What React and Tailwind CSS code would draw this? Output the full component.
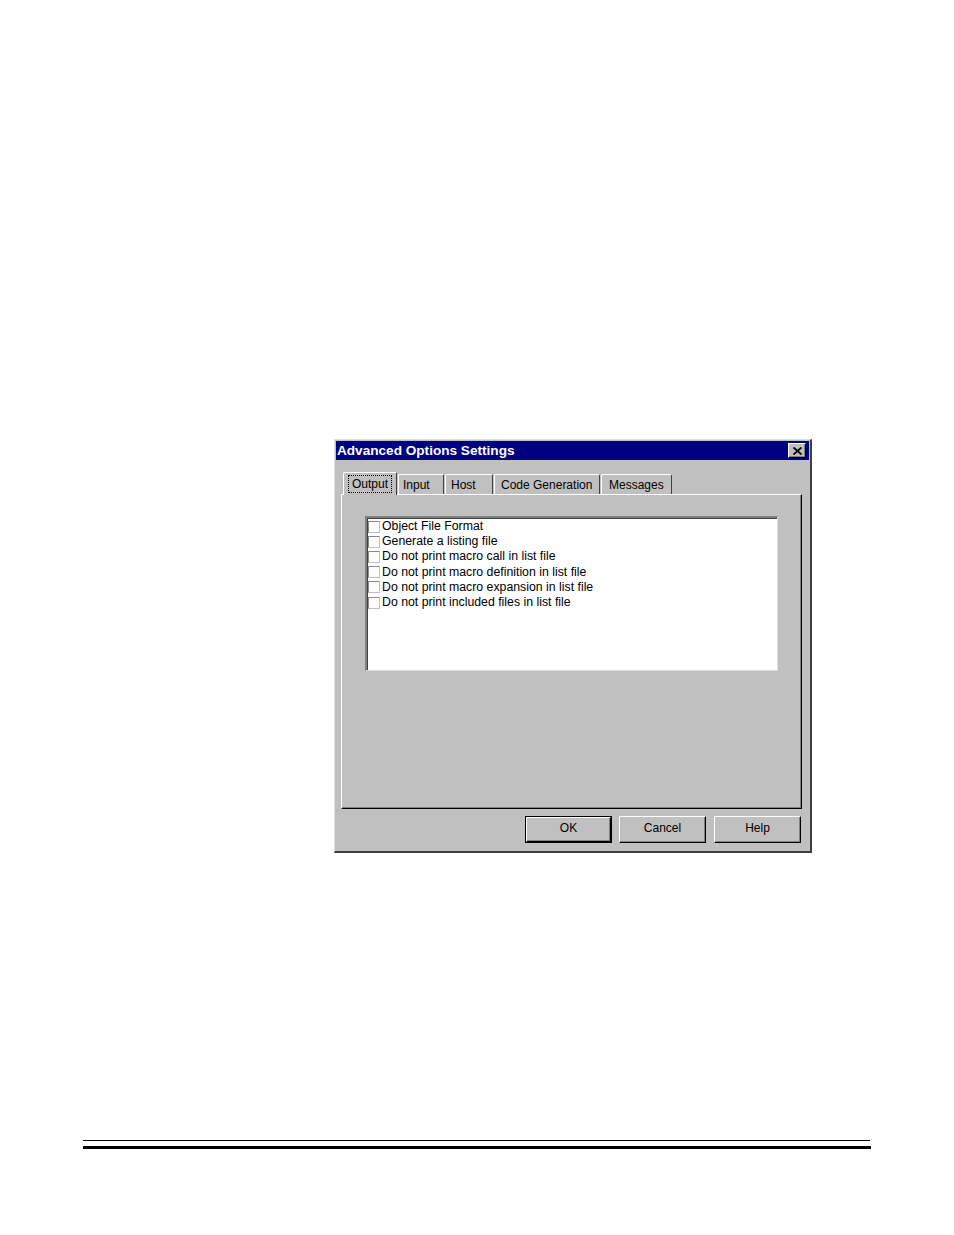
import React from "react";

const items = [
  "Object File Format",
  "Generate a listing file",
  "Do not print macro call in list file",
  "Do not print macro definition in list file",
  "Do not print macro expansion in list file",
  "Do not print included files in list file",
];

function Tab({ label, w, selected }) {
  if (selected) {
    return (
      <div
        className={`h-[23px] ${w} -mb-px relative z-10 bg-[#c0c0c0] border-t border-l border-white border-r border-r-[#404040] rounded-t-[2px] flex items-center justify-center`}
      >
        <span className="border border-dotted border-black px-[3px] leading-[15px] h-[18px] flex items-center">
          {label}
        </span>
      </div>
    );
  }
  return (
    <div
      className={`h-[20px] ${w} bg-[#c0c0c0] border-t border-l border-white border-r border-r-[#404040] rounded-t-[2px] flex items-center justify-start pt-[1px] whitespace-nowrap`}
    >
      {label}
    </div>
  );
}

function Button({ label, def, extra }) {
  return (
    <div
      className={`w-[87px] h-[27px] ${extra || ""} ${
        def ? "border border-black" : ""
      }`}
    >
      <div className="w-full h-full border-t border-l border-white border-r border-b border-r-[#000] border-b-[#000] shadow-[inset_-1px_-1px_#808080] flex items-center justify-center pb-[3px]">
        {label}
      </div>
    </div>
  );
}

export default function App() {
  return (
    <div
      className="min-h-[1235px] bg-white text-black text-[12px] overflow-hidden"
      style={{ fontFamily: '"Liberation Sans", Arial, sans-serif' }}
    >
      <div className="pt-[439px] pl-[334px]">
        <div className="w-[478px] h-[414px] bg-[#c0c0c0] border-t border-l border-[#dfdfdf] border-r-2 border-b-2 border-r-[#404040] border-b-[#404040] p-[1px] flex flex-col">
          {/* title bar */}
          <div className="h-[19px] bg-[#000080] flex items-center justify-between pl-[1px] pr-[3px]">
            <span className="text-white font-bold text-[13.6px] leading-none">
              Advanced Options Settings
            </span>
            <div className="w-[18px] h-[15px] bg-[#c0c0c0] border-t border-l border-white border-r border-b border-r-black border-b-black shadow-[inset_-1px_-1px_#808080] flex items-center justify-center">
              <svg width="9" height="8" viewBox="0 0 9 8">
                <path
                  d="M0.5 0.5 L8.5 7.5 M8.5 0.5 L0.5 7.5"
                  stroke="black"
                  strokeWidth="1.8"
                />
              </svg>
            </div>
          </div>

          {/* tabs */}
          <div className="mt-[11px] ml-[7px] flex items-end h-[23px]">
            <Tab label="Output" w="w-[54px]" selected />
            <Tab label="Input" w="w-[46px] ml-[1px] pl-[4px]" />
            <Tab label="Host" w="w-[48px] ml-[1px] pl-[5px]" />
            <Tab label="Code Generation" w="w-[106px] ml-[1px] pl-[6px]" />
            <Tab label="Messages" w="w-[71px] ml-[1px] pl-[7px]" />
          </div>

          {/* panel */}
          <div className="ml-[5px] w-[461px] h-[315px] border-t border-l border-white border-r border-b border-r-black border-b-black shadow-[inset_-1px_-1px_#808080] pt-[21px] pl-[23px]">
            <div className="w-[413px] h-[155px] bg-white border-t-2 border-l-2 border-t-[#808080] border-l-[#808080] border-r border-b border-r-[#dfdfdf] border-b-[#dfdfdf] shadow-[inset_1px_1px_#404040] pt-[1px] pl-[1px]">
              {items.map((t) => (
                <div key={t} className="h-[15.2px] flex items-center">
                  <div className="w-[12px] h-[12px] bg-white border border-[#8a8a8a] border-r-[#c0c0c0] border-b-[#c0c0c0] shrink-0" />
                  <span className="ml-[2px] leading-[15px] text-[12.3px] whitespace-nowrap">
                    {t}
                  </span>
                </div>
              ))}
            </div>
          </div>

          {/* buttons */}
          <div className="mt-[7px] flex justify-end pr-[8px]">
            <Button label="OK" def />
            <Button label="Cancel" extra="ml-[7px]" />
            <Button label="Help" extra="ml-[8px]" />
          </div>
        </div>
      </div>

      {/* footer rules */}
      <div className="mt-[287px] ml-[83px] w-[787px] h-[1px] bg-black" />
      <div className="mt-[5px] ml-[83px] w-[788px] h-[3px] bg-black" />
    </div>
  );
}
